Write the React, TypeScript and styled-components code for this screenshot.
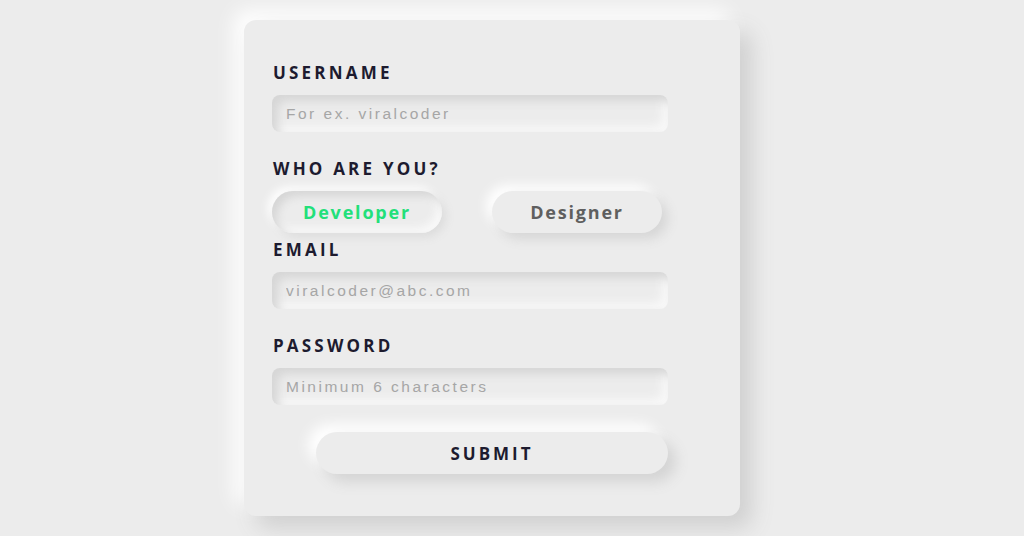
import React from "react";
import styled, { createGlobalStyle } from "styled-components";

const Global = createGlobalStyle`
  html, body { margin: 0; padding: 0; background: #ececec; }
  body { width: 1024px; height: 536px; overflow: hidden; }
`;

const Page = styled.div`
  width: 1024px;
  height: 536px;
  display: flex;
  justify-content: flex-start;
  padding: 20px 0 0 244px;
  box-sizing: border-box;
`;

const Card = styled.form`
  width: 496px;
  height: 496px;
  box-sizing: border-box;
  background: #ececec;
  border-radius: 12px;
  box-shadow: 12px 12px 22px #d0d0d0, -10px -10px 20px #ffffff;
  padding: 43px 29px 0 29px;
  display: flex;
  flex-direction: column;
  font-family: "Open Sans", sans-serif;
`;

const Label = styled.label<{ $mt?: number }>`
  font-family: "Open Sans", sans-serif;
  font-weight: 700;
  font-size: 17px;
  letter-spacing: 3.2px;
  color: #1d1b2f;
  line-height: 20px;
  margin-top: ${(p) => p.$mt ?? 0}px;
`;

const Input = styled.input`
  margin-top: 12px;
  width: 396px;
  height: 37px;
  box-sizing: border-box;
  border: none;
  outline: none;
  border-radius: 8px;
  background: #ececec;
  box-shadow: inset 6px 6px 10px #d6d6d6, inset -6px -6px 10px #f8f8f8;
  padding: 0 14px;
  margin-left: -1px;
  font-family: "Liberation Sans", Arial, sans-serif;
  font-size: 15.5px;
  letter-spacing: 2.5px;
  color: #444;
  &::placeholder { color: #a6a6a6; }
`;

const Row = styled.div`
  display: flex;
  gap: 50px;
  margin-top: 12px;
  margin-left: -1px;
`;

const Choice = styled.button<{ $active?: boolean }>`
  width: 170px;
  height: 42px;
  border: none;
  border-radius: 21px;
  background: #ececec;
  font-family: "Open Sans", sans-serif;
  font-weight: 700;
  font-size: 18px;
  letter-spacing: 1.8px;
  color: ${(p) => (p.$active ? "#22e07a" : "#5f5f5f")};
  box-shadow: ${(p) =>
    p.$active
      ? "inset 5px 5px 8px #d6d6d6, inset -5px -5px 8px #f9f9f9, 4px 4px 10px #dcdcdc, -4px -4px 10px #ffffff"
      : "6px 6px 12px #d6d6d6, -6px -6px 12px #ffffff"};
  padding: 0;
`;

const Submit = styled.button`
  margin-top: 27px;
  margin-left: 43px;
  width: 352px;
  height: 42px;
  border: none;
  border-radius: 21px;
  background: #ececec;
  box-shadow: 8px 8px 14px #d4d4d4, -8px -8px 14px #ffffff;
  font-family: "Open Sans", sans-serif;
  font-weight: 700;
  font-size: 17px;
  letter-spacing: 3px;
  color: #1d1b2f;
  padding: 0;
`;

export default function App() {
  return (
    <>
      <Global />
      <Page>
        <Card onSubmit={(e) => e.preventDefault()}>
          <Label>USERNAME</Label>
          <Input placeholder="For ex. viralcoder" />
          <Label $mt={27}>WHO ARE YOU?</Label>
          <Row>
            <Choice type="button" $active>Developer</Choice>
            <Choice type="button">Designer</Choice>
          </Row>
          <Label $mt={7}>EMAIL</Label>
          <Input placeholder="viralcoder@abc.com" />
          <Label $mt={27}>PASSWORD</Label>
          <Input placeholder="Minimum 6 characters" />
          <Submit type="submit">SUBMIT</Submit>
        </Card>
      </Page>
    </>
  );
}
